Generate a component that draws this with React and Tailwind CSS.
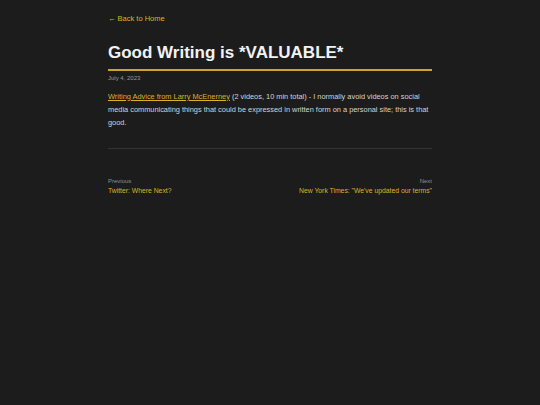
export default function App() {
  return (
    <div className="min-h-[405px] bg-[#1c1c1c] font-['Liberation_Sans',Arial,sans-serif] text-[#e0e0e0]">
      <div className="mx-auto w-[324px] pt-[14px]">
        <a href="#" className="block text-[7.5px] leading-[10px] text-[#dcb224]">
          ← Back to Home
        </a>

        <h1 className="mt-[19px] border-b-2 border-[#c9a52c] pb-[6px] text-[17px] font-bold leading-[20px] text-[#f2f2f2]">
          Good Writing is *VALUABLE*
        </h1>
        <p className="mt-[3px] text-[6px] leading-[8px] text-[#9a9a9a]">July 4, 2023</p>

        <p className="mt-[7.5px] text-[7.4px] leading-[13px] text-[#d4d4d4]">
          <a href="#" className="text-[#dcb224] underline">
            Writing Advice from Larry McEnerney
          </a>{" "}
          (2 videos, 10 min total) - I normally avoid videos on social media communicating things that could be
          expressed in written form on a personal site; this is that good.
        </p>

        <div className="mt-[19.5px] border-t border-[#333333]" />

        <div className="mt-[28px] flex justify-between">
          <div>
            <div className="text-[6px] leading-[9px] text-[#8f8f8f]">Previous</div>
            <a href="#" className="block text-[6.8px] leading-[10px] text-[#dcb224]">
              Twitter: Where Next?
            </a>
          </div>
          <div className="text-right">
            <div className="text-[6px] leading-[9px] text-[#8f8f8f]">Next</div>
            <a href="#" className="block text-[6.8px] leading-[10px] text-[#dcb224]">
              New York Times: "We've updated our terms"
            </a>
          </div>
        </div>
      </div>
    </div>
  );
}
